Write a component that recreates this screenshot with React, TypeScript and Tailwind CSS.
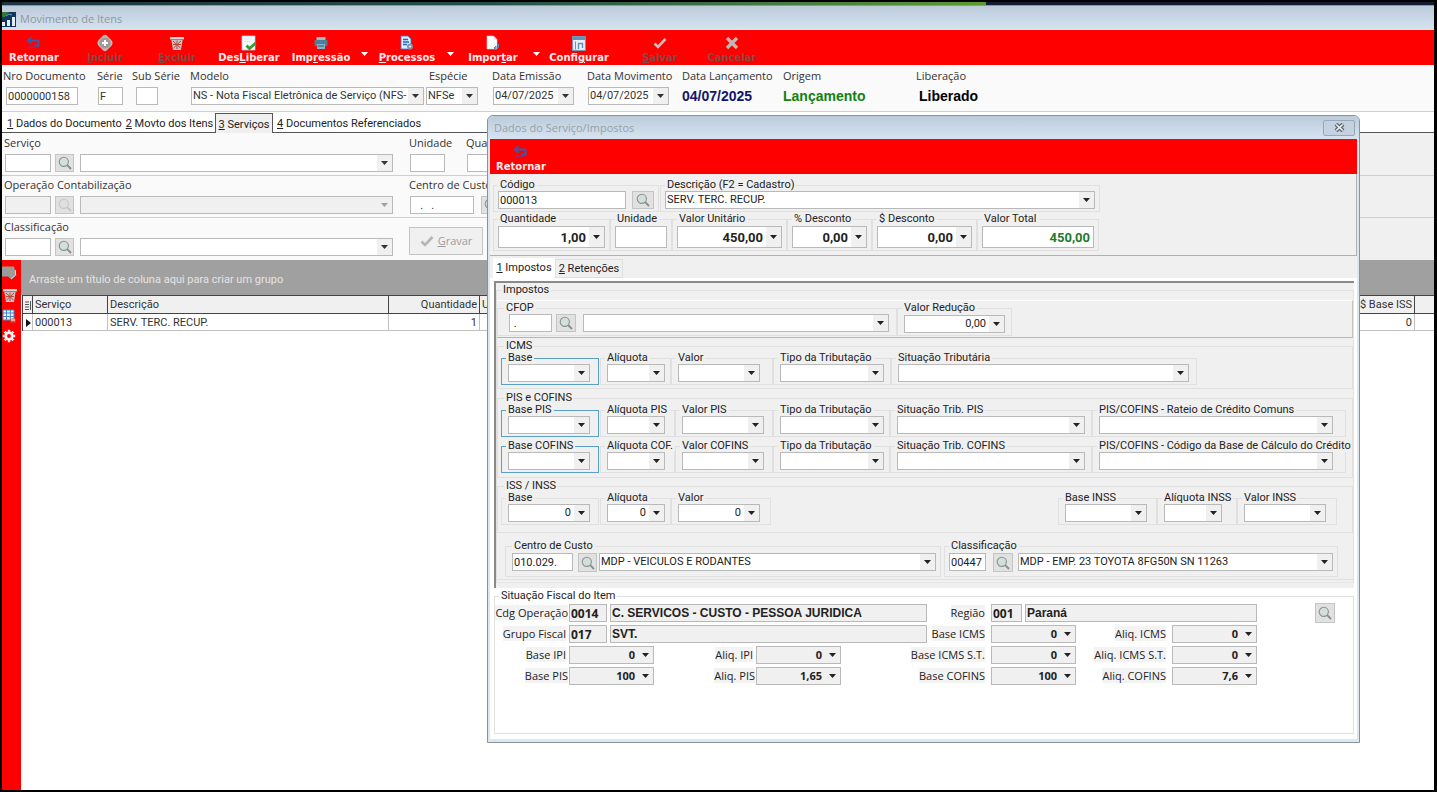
import { useId, useState } from 'react';
import type { ReactNode } from 'react';
import clsx from 'clsx';

type IconProps = { className?: string };

function BackIcon() {
  return (
    <svg width="16" height="14" viewBox="0 0 16 14" fill="none">
      <path d="M3 4.600h9.500v5H8.500" stroke="#3f57a6" strokeWidth="2.200" strokeLinejoin="round" />
      <path d="M5.600 1L1.800 4.600l3.800 3.200" stroke="#3f57a6" strokeWidth="1.800" />
      <path d="M2 11.200h8" stroke="#8d3070" strokeWidth="1.400" />
    </svg>
  );
}

function PlusIcon() {
  return (
    <svg width="18" height="18" viewBox="0 0 18 18">
      <path d="M9 .8c1.600 0 2.300 1.300 3.600 2.600s4 2.900 4 5.600-2.700 4.300-4 5.600S10.600 17.200 9 17.200s-2.300-1.300-3.600-2.600S1.400 11.700 1.400 9s2.700-4.300 4-5.600S7.400.8 9 .8z" fill="#c2b8b8" />
      <circle cx="9" cy="9" r="5.600" fill="#a39898" />
      <path d="M9 6v6M6 9h6" stroke="#fff" strokeWidth="2" />
    </svg>
  );
}

function TrashIcon() {
  return (
    <svg width="16" height="16" viewBox="0 0 16 16">
      <path d="M1 2h14v2.500H1zM2.400 5h11.200L12 15H4z" fill="#cfc0bd" />
      <path d="M4 6l7.500 7M12 6l-7.500 7M8 5.500v8.500M4 9.500h8" stroke="#b54a46" strokeWidth="1" />
      <path d="M1.500 3.200h13" stroke="#eee" strokeWidth=".8" />
    </svg>
  );
}

function DocCheckIcon() {
  return (
    <svg width="16" height="16" viewBox="0 0 16 16">
      <path d="M1 1h13v14H1z" fill="#f4f8ff" stroke="#b7c9dd" strokeWidth=".8" />
      <path d="M3 4h8M3 6.500h6" stroke="#dbe7f4" />
      <path d="M5.500 10.500l3 3 6.200-5.500" stroke="#3b9a2e" strokeWidth="2.800" fill="none" />
    </svg>
  );
}

function PrinterIcon() {
  return (
    <svg width="14" height="14" viewBox="0 0 14 14">
      <path d="M2.500 1h9v3h-9z" fill="#a9bcc6" />
      <rect x=".5" y="4" width="13" height="6" rx="1" fill="#4e7f96" />
      <path d="M3 8h8v5H3z" fill="#7fb4cc" />
      <path d="M4 10h6" stroke="#30566a" />
    </svg>
  );
}

function DocGearIcon() {
  return (
    <svg width="14" height="16" viewBox="0 0 14 16">
      <path d="M1 1h7l3 3v10H1z" fill="#dcecff" stroke="#3c78c8" strokeWidth=".8" />
      <path d="M3 4.500h5M3 7h6M3 9.500h4" stroke="#2566b8" strokeWidth="1.500" />
      <circle cx="10" cy="11.500" r="3" fill="#7f93ad" />
      <circle cx="10" cy="11.500" r="1.100" fill="#e8eef6" />
    </svg>
  );
}

function ImportIcon() {
  return (
    <svg width="14" height="16" viewBox="0 0 14 16">
      <path d="M1 1h6.500L11 4.500V14H1z" fill="#fff" stroke="#cfcfe0" strokeWidth=".6" />
      <path d="M7.500 1v3.500H11" fill="#dde" />
      <path d="M12.500 9v3.500M8 13l2-2v4z" stroke="#5d88c8" fill="#8fb0de" />
    </svg>
  );
}

function ConfigIcon() {
  return (
    <svg width="14" height="15" viewBox="0 0 14 15">
      <rect x=".6" y=".6" width="12.800" height="13.800" fill="#e8f0f6" stroke="#6d9cc0" />
      <path d="M1 1h12v3H1z" fill="#5f94bd" />
      <path d="M3.500 5.500v8" stroke="#5f94bd" />
      <path d="M6.500 13V7.500h4V12" stroke="#5f94bd" strokeWidth="1.400" fill="none" />
    </svg>
  );
}

function CheckIcon({ className }: IconProps) {
  return (
    <svg className={className} width="14" height="12" viewBox="0 0 14 12">
      <path d="M1.500 6.500l3.500 3.500L12.500 2" stroke="currentColor" strokeWidth="2.600" fill="none" />
    </svg>
  );
}

function CrossIcon() {
  return (
    <svg width="14" height="14" viewBox="0 0 14 14">
      <path d="M2 2l10 10M12 2L2 12" stroke="#c4b4b4" strokeWidth="3.400" />
    </svg>
  );
}

function NoteIcon() {
  return (
    <svg width="16" height="16" viewBox="0 0 16 16">
      <path d="M0 1.500h12l1.500 6.500 1 2-5 4.500L6 11.500H0z" fill="#9b9b9b" />
      <path d="M13.500 5v5L9 14" stroke="#d5d5d5" fill="none" />
    </svg>
  );
}

function GridIcon() {
  return (
    <svg width="15" height="14" viewBox="0 0 15 14">
      <path d="M1 1h11v10H1z" fill="#eaf4ff" />
      <path d="M1 4h11M1 7.500h11M4.500 1v10M8.300 1v10M1 1h11v10H1z" stroke="#3f86c9" fill="none" />
      <path d="M8.500 9.500h5v4h-5z" fill="#d8533f" />
      <path d="M9 11h4" stroke="#fff" />
    </svg>
  );
}

function GearIcon() {
  return (
    <svg width="14" height="14" viewBox="0 0 14 14">
      <circle cx="7" cy="7" r="3.200" fill="none" stroke="#eef1f6" strokeWidth="2.600" />
      <path d="M7 .8v2.400M7 10.800v2.400M.8 7h2.400M10.800 7h2.400M2.600 2.600l1.700 1.700M9.700 9.700l1.700 1.700M11.400 2.600L9.700 4.300M4.300 9.700l-1.700 1.700" stroke="#eef1f6" strokeWidth="2.400" />
    </svg>
  );
}

function LensIcon({ className }: IconProps) {
  return (
    <svg className={className} width="14" height="14" viewBox="0 0 14 14" fill="none">
      <circle cx="5.800" cy="5.800" r="4.600" fill="#d3dfdd" stroke="#87918f" strokeWidth="1.100" />
      <path d="M9.200 9.200L13 13" stroke="#858d8c" strokeWidth="1.800" />
    </svg>
  );
}

function AppIcon() {
  return (
    <svg width="14" height="15" viewBox="0 0 14 15">
      <path d="M0 0h14v15H0z" fill="#12365c" />
      <path d="M0 0h7L3 5H0z" fill="#2f7a3a" />
      <path d="M4 4l3-2 3 1" stroke="#6fa0c8" fill="none" />
      <path d="M0 14V10h3v4zM5 14V8h3v6zM10 14V5h3v9z" fill="#e6eef5" />
    </svg>
  );
}

function Triangle({ className }: IconProps) {
  return (
    <svg className={className} width="7" height="4" viewBox="0 0 7 4" fill="currentColor">
      <path d="M0 0h7L3.500 4z" />
    </svg>
  );
}

/* Caption with its underlined access key: "Des&Liberar" underlines the L */
function Caption({ text }: { text: string }) {
  const at = text.indexOf('&');
  if (at < 0) return <span>{text}</span>;
  return (
    <span>
      {text.slice(0, at)}
      <u>{text[at + 1]}</u>
      {text.slice(at + 2)}
    </span>
  );
}

interface ToolButtonProps {
  icon: ReactNode;
  text: string;
  className?: string;
  disabled?: boolean;
  menu?: boolean;
}

function ToolButton({ icon, text, className = 'w-[72px]', disabled, menu }: ToolButtonProps) {
  return (
    <>
      <button
        type="button"
        disabled={disabled}
        className={clsx(
          "flex shrink-0 flex-col items-center pt-1 font-['DejaVu_Sans',sans-serif] text-[10px] leading-3 font-bold",
          disabled ? 'text-[#884845]' : 'text-[#ffeaea]',
          className,
        )}
      >
        <span className="flex h-[18px] items-center">{icon}</span>
        <Caption text={text} />
      </button>
      {menu && (
        <button type="button" aria-label={`Opções de ${text.replace('&', '')}`} className="flex w-[14px] shrink-0 items-center justify-center pt-3 text-white">
          <Triangle />
        </button>
      )}
    </>
  );
}

function LensButton({ className = 'w-[19px] h-[18px]', disabled, label }: { className?: string; disabled?: boolean; label: string }) {
  return (
    <button
      type="button"
      aria-label={label}
      disabled={disabled}
      className={clsx('flex shrink-0 items-center justify-center border border-[#c4c4c4] bg-[#e1e1e1]', className)}
    >
      <LensIcon className={disabled ? 'opacity-30' : ''} />
    </button>
  );
}

interface BoxProps {
  id?: string;
  label?: string;
  value?: string;
  className: string;
  disabled?: boolean;
}

function TextBox({ id, label, value = '', className, disabled }: BoxProps) {
  const [text, setText] = useState(value);
  return (
    <input
      id={id}
      aria-label={label}
      disabled={disabled}
      value={text}
      onChange={(e) => setText(e.target.value)}
      className={clsx('min-w-0 shrink-0 border border-[#b9b9b9] px-px', disabled ? 'bg-[#f0f0f0]' : 'bg-white', className)}
    />
  );
}

/* Drop-down list */
function Combo({ id, label, value = '', className, disabled }: BoxProps) {
  return (
    <span className={clsx('relative flex h-[18px] shrink-0 border border-[#b9b9b9]', disabled ? 'bg-[#f0f0f0] text-[#a0a0a0]' : 'bg-white', className)}>
      <select id={id} aria-label={label} disabled={disabled} className="w-full min-w-0 appearance-none bg-transparent pr-[15px] pl-px">
        <option>{value}</option>
      </select>
      <span className="pointer-events-none absolute inset-y-0 right-0 flex w-[15px] items-center justify-center bg-[#f0f0f0]">
        <Triangle />
      </span>
    </span>
  );
}

/* Number box with a calculator drop-down */
function NumberBox({ id, value = '', className, disabled, bold }: BoxProps & { bold?: boolean }) {
  const [text, setText] = useState(value);
  return (
    <span className={clsx('flex shrink-0 border border-[#b9b9b9]', disabled ? 'bg-[#f0f0f0]' : 'bg-white', className)}>
      <input
        id={id}
        value={text}
        onChange={(e) => setText(e.target.value)}
        className={clsx('w-full min-w-0 bg-transparent pr-[3px] text-right', bold && 'font-bold')}
      />
      <button type="button" aria-label="Calculadora" className="flex w-[15px] shrink-0 items-center justify-center bg-[#f0f0f0]">
        <Triangle />
      </button>
    </span>
  );
}

interface GroupProps {
  label: string;
  id?: string;
  blue?: boolean;
  className?: string;
  children?: ReactNode;
}

function Group({ label, id, blue, className, children }: GroupProps) {
  return (
    <fieldset className={clsx('min-w-0 shrink-0 border', blue ? 'border-[#5a9fc8]' : 'border-[#e0e0e0]', className)}>
      <legend className="px-[2px] leading-3 whitespace-nowrap">{id ? <label htmlFor={id}>{label}</label> : label}</legend>
      {children}
    </fieldset>
  );
}

interface TaxProps {
  label: string;
  group: string;
  box: string;
  value?: string;
  blue?: boolean;
  list?: boolean;
}

function Tax({ label, group, box, value, blue, list }: TaxProps) {
  const id = useId();
  return (
    <Group label={label} id={id} blue={blue} className={clsx('pb-[2px] pl-[6px] [&>legend]:-ml-[2px]', group)}>
      {list ? <Combo id={id} value={value} className={box} /> : <NumberBox id={id} value={value} className={clsx('h-[18px]', box)} />}
    </Group>
  );
}

function HeaderField({ label, className, children }: { label: string; className: string; children: (id: string) => ReactNode }) {
  const id = useId();
  return (
    <div className={clsx('shrink-0', className)}>
      <label htmlFor={id} className="block h-[17px] leading-3 whitespace-nowrap">
        {label}
      </label>
      <div className="flex h-[18px] items-center pl-px font-[Roboto,sans-serif] text-[11px]">{children(id)}</div>
    </div>
  );
}

function FiscalLabel({ text, htmlFor, className }: { text: string; htmlFor: string; className: string }) {
  return (
    <label htmlFor={htmlFor} className={clsx('shrink-0 text-right whitespace-nowrap', className)}>
      <span className="bg-[#f3f3f3]">{text}</span>
    </label>
  );
}

function ServiceDialog() {
  return (
    <section
      role="dialog"
      aria-label="Dados do Serviço/Impostos"
      className="absolute top-[113px] left-[485px] w-[873px] rounded-t-md border border-[#87929d] bg-[#dfe6ee] px-[2px] pb-[3px] font-[Roboto,sans-serif] text-[11px] leading-3 text-[#222]"
    >
      <header className="-mx-[2px] flex h-[23px] items-center justify-between rounded-t-md bg-linear-to-b from-[#bccbda] to-[#d6e4f1] pr-1 pl-[6px]">
        <h2 className="font-['Open_Sans',sans-serif] text-[11px] text-[#98a0a8]">Dados do Serviço/Impostos</h2>
        <button type="button" aria-label="Fechar" className="flex h-4 w-8 items-center justify-center rounded-xs border border-[#98a7ba] bg-[#c3d1e0]">
          <svg width="11" height="9" viewBox="0 0 11 9">
            <path d="M2 1.200l7 6.600M9 1.200L2 7.800" stroke="#5c6671" strokeWidth="4" />
            <path d="M2.300 1.500l6.400 6M8.700 1.500l-6.400 6" stroke="#f2f5f8" strokeWidth="1.600" />
          </svg>
        </button>
      </header>

      <div className="flex h-[35px] bg-[#fe0000]">
        <ToolButton icon={<BackIcon />} text="Retornar" className="w-[62px]" />
      </div>

      <div className="border-r border-b border-[#b0b0b0] bg-[#f0f0f0] pt-[5px] pb-1 pl-[3px]">
        <div className="mb-px flex gap-px">
          <Group label="Código" id="codigo" className="px-1 pb-[2px]">
            <div className="flex gap-[6px]">
              <TextBox id="codigo" value="000013" className="h-[18px] w-32" />
              <LensButton label="Pesquisar código" className="h-[18px] w-[22px]" />
            </div>
          </Group>
          <Group label="Descrição (F2 = Cadastro)" id="descricao" className="px-1 pb-[2px]">
            <Combo id="descricao" value="SERV. TERC. RECUP." className="w-[430px]" />
          </Group>
        </div>
        <div className="flex">
          <Group label="Quantidade" id="qtd" className="px-1 pt-px pb-[2px]">
            <NumberBox id="qtd" value="1,00" bold className="h-[22px] w-[107px] text-[13px]" />
          </Group>
          <Group label="Unidade" id="unid" className="px-1 pt-px pb-[2px]">
            <TextBox id="unid" className="h-[22px] w-[52px]" />
          </Group>
          <Group label="Valor Unitário" id="vunit" className="px-1 pt-px pb-[2px]">
            <NumberBox id="vunit" value="450,00" bold className="h-[22px] w-[105px] text-[13px]" />
          </Group>
          <Group label="% Desconto" id="pdesc" className="px-1 pt-px pb-[2px]">
            <NumberBox id="pdesc" value="0,00" bold className="h-[22px] w-[75px] text-[13px]" />
          </Group>
          <Group label="$ Desconto" id="vdesc" className="px-1 pt-px pb-[2px]">
            <NumberBox id="vdesc" value="0,00" bold className="h-[22px] w-[95px] text-[13px]" />
          </Group>
          <Group label="Valor Total" id="vtotal" className="px-1 pt-px pb-[2px]">
            <TextBox id="vtotal" value="450,00" className="h-[22px] w-[112px] pr-[3px] text-right text-[13px] font-bold text-[#1f7a28]" />
          </Group>
        </div>
      </div>

      <div role="tablist" className="flex h-[22px] items-end bg-[#f0f0f0] pl-[3px]">
        <button type="button" role="tab" aria-selected="true" className="h-5 w-[62px] bg-white">
          <Caption text="&1 Impostos" />
        </button>
        <button type="button" role="tab" aria-selected="false" className="h-[19px] w-[68px] border border-[#e0e0e0]">
          <Caption text="&2 Retenções" />
        </button>
      </div>

      <div className="bg-white pt-[3px] pr-[3px] pb-[5px] pl-1">
        <div className="border-t-2 border-l-2 border-[#8a8a8a] bg-[#f0f0f0] pt-px pb-[5px]">
          <Group label="Impostos" className="border-b-[#e6e6e6] pb-[2px] [&>legend]:ml-1">
            <div className="mt-1 mb-[2px] flex border-t border-r border-b border-t-white border-r-[#c4c4c4] border-b-[#b5b5b5] pt-px pb-px">
              <Group label="CFOP" id="cfop" className="w-[400px] pb-[2px] pl-[11px] [&>legend]:-ml-[5px]">
                <div className="flex">
                  <TextBox id="cfop" value=" ." className="h-[18px] w-[43px]" />
                  <LensButton label="Pesquisar CFOP" className="mx-1 h-[18px] w-5" />
                  <Combo label="Descrição do CFOP" className="ml-[3px] w-[306px]" />
                </div>
              </Group>
              <Tax label="Valor Redução" value="0,00" group="w-[115px] pt-px" box="w-[101px]" />
            </div>

            <Group label="ICMS" className="px-[3px] pb-[3px] [&>legend]:ml-[3px]">
              <div className="flex">
                <Tax label="Base" group="w-[98px] mr-px" box="w-[82px]" blue />
                <Tax label="Alíquota" group="w-[71px]" box="w-[58px]" />
                <Tax label="Valor" group="w-[102px]" box="w-[82px]" />
                <Tax label="Tipo da Tributação" group="w-[118px]" box="w-[104px]" list />
                <Tax label="Situação Tributária" group="w-[306px]" box="w-[291px]" list />
              </div>
            </Group>

            <Group label="PIS e COFINS" className="mt-[3px] px-[3px] pb-1 [&>legend]:ml-[3px]">
              <div className="flex">
                <Tax label="Base PIS" group="w-[98px] mr-px" box="w-[82px]" blue />
                <Tax label="Alíquota PIS" group="w-[75px]" box="w-[58px]" />
                <Tax label="Valor PIS" group="w-[98px]" box="w-[82px]" />
                <Tax label="Tipo da Tributação" group="w-[117px]" box="w-[104px]" list />
                <Tax label="Situação Trib. PIS" group="w-[202px]" box="w-[188px]" list />
                <Tax label="PIS/COFINS - Rateio de Crédito Comuns" group="w-[254px]" box="w-[234px]" list />
              </div>
              <div className="mt-[3px] flex">
                <Tax label="Base COFINS" group="w-[98px] mr-px" box="w-[82px]" blue />
                <Tax label="Alíquota COF." group="w-[75px]" box="w-[58px]" />
                <Tax label="Valor COFINS" group="w-[98px]" box="w-[82px]" />
                <Tax label="Tipo da Tributação" group="w-[117px]" box="w-[104px]" list />
                <Tax label="Situação Trib. COFINS" group="w-[202px]" box="w-[188px]" list />
                <Tax label="PIS/COFINS - Código da Base de Cálculo do Crédito" group="w-[254px]" box="w-[234px]" list />
              </div>
            </Group>

            <Group label="ISS / INSS" className="mt-[2px] px-[3px] pb-[7px] [&>legend]:ml-[3px]">
              <div className="flex">
                <Tax label="Base" value="0" group="w-[98px] mr-px" box="w-[82px]" />
                <Tax label="Alíquota" value="0" group="w-[71px]" box="w-[58px]" />
                <Tax label="Valor" value="0" group="w-[100px]" box="w-[82px]" />
                <div className="mr-3 ml-auto flex">
                  <Tax label="Base INSS" group="w-[99px]" box="w-[82px]" />
                  <Tax label="Alíquota INSS" group="w-20" box="w-[58px]" />
                  <Tax label="Valor INSS" group="w-[100px]" box="w-[82px]" />
                </div>
              </div>
            </Group>

            <div className="flex gap-[3px] border-b border-[#e0e0e0] pt-[7px] pb-[2px] pl-2">
              <Group label="Centro de Custo" id="ccusto" className="pt-px pr-1 pb-1 pl-[6px]">
                <div className="flex">
                  <TextBox id="ccusto" value="010.029." className="h-[18px] w-[61px]" />
                  <LensButton label="Pesquisar centro de custo" className="mr-[2px] ml-[5px] h-[19px] w-[19px]" />
                  <Combo label="Descrição do centro de custo" value="MDP - VEICULOS E RODANTES" className="w-[337px]" />
                </div>
              </Group>
              <Group label="Classificação" id="classif" className="px-1 pt-px pb-1">
                <div className="flex">
                  <TextBox id="classif" value="00447" className="h-[18px] w-[37px]" />
                  <LensButton label="Pesquisar classificação" className="mr-[5px] ml-[7px] h-[19px] w-5" />
                  <Combo label="Descrição da classificação" value="MDP - EMP. 23 TOYOTA 8FG50N SN 11263" className="w-[315px]" />
                </div>
              </Group>
            </div>
          </Group>
        </div>

        <Group label="Situação Fiscal do Item" className="mt-[2px] pt-[2px] pb-12 [&>legend]:ml-1">
          <div className="flex flex-col gap-[3px] font-['Open_Sans','Noto_Sans',sans-serif] text-[11px] leading-[18px]">
            <div className="flex">
              <FiscalLabel text="Cdg Operação" htmlFor="cdg" className="w-[74px] pr-px" />
              <TextBox id="cdg" disabled value="0014" className="h-[18px] w-[38px] text-xs font-bold" />
              <TextBox label="Operação" disabled value="C. SERVICOS - CUSTO - PESSOA JURIDICA" className="ml-[3px] h-[18px] w-[317px] font-['Liberation_Sans',sans-serif] text-xs font-bold" />
              <FiscalLabel text="Região" htmlFor="regiao" className="w-16 pr-[6px]" />
              <TextBox id="regiao" disabled value="001" className="h-[18px] w-[31px] text-xs font-bold" />
              <TextBox label="Nome da região" disabled value="Paraná" className="ml-[3px] h-[18px] w-[232px] font-['Liberation_Sans',sans-serif] text-xs font-bold" />
              <LensButton label="Pesquisar situação fiscal" className="-my-px mr-[18px] ml-auto h-5 w-5" />
            </div>
            <div className="flex">
              <FiscalLabel text="Grupo Fiscal" htmlFor="grupo" className="w-[74px] pr-[3px]" />
              <TextBox id="grupo" disabled value="017" className="h-[18px] w-[38px] text-xs font-bold" />
              <TextBox label="Descrição do grupo" disabled value="SVT." className="ml-[3px] h-[18px] w-[317px] font-['Liberation_Sans',sans-serif] text-xs font-bold" />
              <FiscalLabel text="Base ICMS" htmlFor="bicms" className="w-16 pr-[6px]" />
              <NumberBox id="bicms" value="0" disabled bold className="h-[18px] w-[85px]" />
              <FiscalLabel text="Aliq. ICMS" htmlFor="aicms" className="w-24 pr-[6px]" />
              <NumberBox id="aicms" value="0" disabled bold className="h-[18px] w-[85px]" />
            </div>
            <div className="flex">
              <FiscalLabel text="Base IPI" htmlFor="bipi" className="w-[74px] pr-[3px]" />
              <NumberBox id="bipi" value="0" disabled bold className="h-[18px] w-[85px]" />
              <FiscalLabel text="Aliq. IPI" htmlFor="aipi" className="w-[102px] pr-[3px]" />
              <NumberBox id="aipi" value="0" disabled bold className="h-[18px] w-[85px]" />
              <FiscalLabel text="Base ICMS S.T." htmlFor="bst" className="w-[150px] pr-[6px]" />
              <NumberBox id="bst" value="0" disabled bold className="h-[18px] w-[85px]" />
              <FiscalLabel text="Aliq. ICMS S.T." htmlFor="ast" className="w-24 pr-[6px]" />
              <NumberBox id="ast" value="0" disabled bold className="h-[18px] w-[85px]" />
            </div>
            <div className="flex">
              <FiscalLabel text="Base PIS" htmlFor="bpis" className="w-[74px] pr-px" />
              <NumberBox id="bpis" value="100" disabled bold className="h-[18px] w-[85px]" />
              <FiscalLabel text="Aliq. PIS" htmlFor="apis" className="w-[102px] pr-px" />
              <NumberBox id="apis" value="1,65" disabled bold className="h-[18px] w-[85px]" />
              <FiscalLabel text="Base COFINS" htmlFor="bcof" className="w-[150px] pr-[6px]" />
              <NumberBox id="bcof" value="100" disabled bold className="h-[18px] w-[85px]" />
              <FiscalLabel text="Aliq. COFINS" htmlFor="acof" className="w-24 pr-[6px]" />
              <NumberBox id="acof" value="7,6" disabled bold className="h-[18px] w-[85px]" />
            </div>
          </div>
        </Group>
      </div>
    </section>
  );
}

export default function App() {
  return (
    <main className="relative flex min-h-screen flex-col overflow-hidden border-2 border-r-[3px] border-black bg-white font-['Open_Sans','Noto_Sans',sans-serif] text-[11px] leading-3 text-[#333]">
      <div className="flex h-[3px] bg-[#141c33]">
        <div className="w-[984px] bg-linear-to-r from-[#1c3440] via-[#24504a] to-[#5f9a2b]" />
      </div>

      <header className="flex h-[25px] items-center gap-1 border-t border-[#8d979f] bg-linear-to-b from-[#bccbda] to-[#d6e4f1] pt-[2px]">
        <AppIcon />
        <h1 className="text-[11px] text-[#8f979f]">Movimento de Itens</h1>
      </header>

      <div className="flex h-[35px] bg-[#fe0000]">
        <ToolButton icon={<BackIcon />} text="Retornar" className="mr-[3px] w-16" />
        <ToolButton icon={<PlusIcon />} text="&Incluir" disabled />
        <ToolButton icon={<TrashIcon />} text="&Excluir" disabled />
        <ToolButton icon={<DocCheckIcon />} text="Des&Liberar" />
        <ToolButton icon={<PrinterIcon />} text="Imp&ressão" menu />
        <ToolButton icon={<DocGearIcon />} text="&Processos" menu />
        <ToolButton icon={<ImportIcon />} text="Impor&tar" menu />
        <ToolButton icon={<ConfigIcon />} text="Confi&gurar" className="mr-[9px] w-[72px]" />
        <ToolButton icon={<CheckIcon className="text-[#d0bcbc]" />} text="&Salvar" disabled />
        <ToolButton icon={<CrossIcon />} text="Cancelar" disabled />
      </div>

      <form className="flex h-[47px] border-b border-[#cfcfcf] bg-[#fafafa] pt-[5px] pl-px">
        <HeaderField label="Nro Documento" className="w-[94px] [&>div]:pl-[3px]">
          {(id) => <TextBox id={id} value="0000000158" className="h-[18px] w-[72px]" />}
        </HeaderField>
        <HeaderField label="Série" className="w-[35px]">
          {(id) => <TextBox id={id} value="F" className="h-[18px] w-[25px]" />}
        </HeaderField>
        <HeaderField label="Sub Série" className="w-[58px] [&>div]:pl-[4px]">
          {(id) => <TextBox id={id} className="h-[18px] w-[22px]" />}
        </HeaderField>
        <HeaderField label="Modelo" className="w-[236px]">
          {(id) => <Combo id={id} value="NS - Nota Fiscal Eletrônica de Serviço (NFS-" className="w-[233px]" />}
        </HeaderField>
        <HeaderField label="Espécie" className="w-[66px] [&>div]:pl-0 [&>label]:pl-[3px]">
          {(id) => <Combo id={id} value="NFSe" className="w-[52px]" />}
        </HeaderField>
        <HeaderField label="Data Emissão" className="w-[95px]">
          {(id) => <Combo id={id} value="04/07/2025" className="w-[81px]" />}
        </HeaderField>
        <HeaderField label="Data Movimento" className="w-[95px]">
          {(id) => <Combo id={id} value="04/07/2025" className="w-[81px]" />}
        </HeaderField>
        <HeaderField label="Data Lançamento" className="w-[101px] [&>div]:pl-0">
          {(id) => <output id={id} className="font-['Liberation_Sans',sans-serif] text-[14px] font-bold text-[#14146e]">04/07/2025</output>}
        </HeaderField>
        <HeaderField label="Origem" className="w-[133px] [&>div]:pl-0">
          {(id) => <output id={id} className="font-['Liberation_Sans',sans-serif] text-[14px] font-bold text-[#128012]">Lançamento</output>}
        </HeaderField>
        <HeaderField label="Liberação" className="w-20 [&>div]:pl-[3px]">
          {(id) => <output id={id} className="font-['Liberation_Sans',sans-serif] text-[14px] font-bold text-black">Liberado</output>}
        </HeaderField>
      </form>

      <div role="tablist" className="flex h-[21px] items-end bg-white font-[Roboto,sans-serif] text-[11px] text-[#222]">
        <button type="button" role="tab" aria-selected="false" className="h-5 w-[122px] border-b border-[#555] pt-[3px] pl-[5px] text-left">
          <Caption text="&1 Dados do Documento" />
        </button>
        <button type="button" role="tab" aria-selected="false" className="h-5 w-[91px] border-b border-[#555] pt-[3px]">
          <Caption text="&2 Movto dos Itens" />
        </button>
        <button type="button" role="tab" aria-selected="true" className="h-5 w-[58px] border-x border-t border-[#555] bg-[#f0f0f0] pt-[2px]">
          <Caption text="&3 Serviços" />
        </button>
        <button type="button" role="tab" aria-selected="false" className="h-5 flex-1 border-b border-[#555] pt-[3px] pl-1 text-left">
          <Caption text="&4 Documentos Referenciados" />
        </button>
      </div>

      <form className="flex flex-col bg-linear-to-r from-[#fafafa] from-60% to-[#f0f0f0] to-60%">
        <div className="flex h-[43px] border-b border-[#cfcfcf] pt-1 pl-[2px]">
          <HeaderField label="Serviço" className="w-[405px]">
            {(id) => (
              <>
                <TextBox id={id} className="mr-1 h-[18px] w-[46px]" />
                <LensButton label="Pesquisar serviço" />
                <Combo label="Descrição do serviço" className="ml-[6px] w-[313px]" />
              </>
            )}
          </HeaderField>
          <HeaderField label="Unidade" className="w-[57px]">
            {(id) => <TextBox id={id} className="h-[18px] w-[35px]" />}
          </HeaderField>
          <HeaderField label="Quantidade" className="w-[90px]">
            {(id) => <TextBox id={id} className="h-[18px] w-20" />}
          </HeaderField>
        </div>
        <div className="flex h-[42px] border-b border-[#cfcfcf] pt-[3px] pl-[2px]">
          <HeaderField label="Operação Contabilização" className="w-[405px]">
            {(id) => (
              <>
                <TextBox id={id} disabled className="mr-1 h-[18px] w-[46px]" />
                <LensButton label="Pesquisar operação" disabled />
                <Combo label="Descrição da operação" disabled className="ml-[6px] w-[313px]" />
              </>
            )}
          </HeaderField>
          <HeaderField label="Centro de Custo" className="w-[105px]">
            {(id) => (
              <>
                <TextBox id={id} value="   .   ." className="mr-[7px] h-[18px] w-16" />
                <LensButton label="Pesquisar centro" />
              </>
            )}
          </HeaderField>
        </div>
        <div className="flex h-[42px] pt-[3px] pl-[2px]">
          <HeaderField label="Classificação" className="w-[405px]">
            {(id) => (
              <>
                <TextBox id={id} className="mr-1 h-[18px] w-[46px]" />
                <LensButton label="Pesquisar classificação do item" />
                <Combo label="Descrição da classificação do item" className="ml-[6px] w-[313px]" />
              </>
            )}
          </HeaderField>
          <button type="button" disabled className="mt-[6px] flex h-7 w-[74px] items-center justify-center gap-1 border border-[#c4c4c4] bg-[#f0f0f0] text-[#9c9c9c]">
            <CheckIcon className="text-[#b5b5b5]" />
            <Caption text="&Gravar" />
          </button>
        </div>
      </form>

      <div className="flex flex-1">
        <nav className="flex w-[19px] shrink-0 flex-col items-start gap-[6px] bg-[#fe0000] pt-[5px]">
          <button type="button" aria-label="Editar"><NoteIcon /></button>
          <button type="button" aria-label="Excluir"><TrashIcon /></button>
          <button type="button" aria-label="Grade"><GridIcon /></button>
          <button type="button" aria-label="Opções"><GearIcon /></button>
        </nav>
        <div className="min-w-0 flex-1 font-[Roboto,sans-serif] text-[11px]">
          <p className="h-[35px] bg-[#a0a0a0] pt-[14px] pl-2 text-[#e4e4e4]">Arraste um título de coluna aqui para criar um grupo</p>
          <table className="ml-px w-full table-fixed border-collapse border-t border-[#444] text-left">
            <thead>
              <tr className="h-[18px] border-b border-[#444] bg-[#f0f0f0] *:border-r *:border-[#444] *:pt-px *:font-normal *:whitespace-nowrap">
                <th className="w-[10px] border-l pl-[2px]">
                  <svg width="6" height="9" viewBox="0 0 6 9"><path d="M0 1h4M0 3.500h4M0 6h4M0 8.500h4M5.500 0v9" stroke="#555" /></svg>
                </th>
                <th className="w-[75px] pl-[2px]">Serviço</th>
                <th className="w-[281px] pl-[2px]">Descrição</th>
                <th className="w-[91px] pr-[2px] text-right">Quantidade</th>
                <th className="pl-[2px]">Un.</th>
                <th className="w-[57px] pr-[2px] text-right">$ Base ISS</th>
                <th className="w-5" aria-label="Rolagem"></th>
              </tr>
            </thead>
            <tbody>
              <tr className="h-[17px] border-b border-[#c0c0c0] *:border-r *:border-[#c0c0c0] *:pt-px">
                <td className="border-l border-l-[#444]! pl-[3px]">
                  <svg width="5" height="8" viewBox="0 0 5 8"><path d="M0 0l5 4-5 4z" fill="#111" /></svg>
                </td>
                <td className="pl-[2px]">000013</td>
                <td className="pl-[2px]">SERV. TERC. RECUP.</td>
                <td className="pr-[2px] text-right">1</td>
                <td></td>
                <td className="pr-[2px] text-right">0</td>
                <td></td>
              </tr>
            </tbody>
          </table>
        </div>
      </div>

      <ServiceDialog />
    </main>
  );
}
